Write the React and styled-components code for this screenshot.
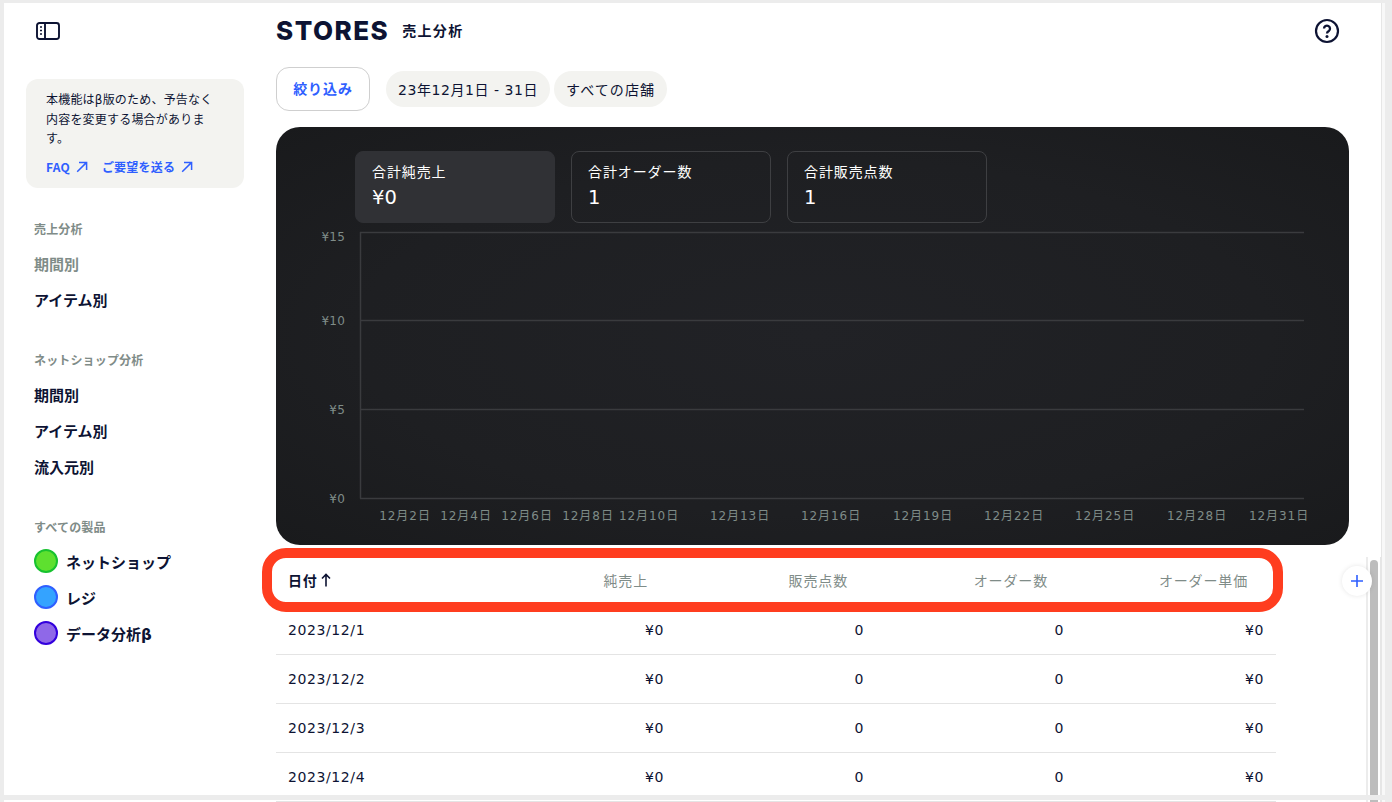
import React from "react";
import styled, { createGlobalStyle } from "styled-components";

const NAVY = "#0d1333";
const GREY = "#7f8c88";
const BLUE = "#2f5fff";
const CHIP = "#f3f3f0";
const JP = `"Noto Sans CJK JP", sans-serif`;
const NUM = `"DejaVu Sans", "Noto Sans CJK JP", sans-serif`;

const Global = createGlobalStyle`
  html, body { margin: 0; padding: 0; height: 802px; overflow: hidden; background: #ececec; }
  body { font-family: ${JP}; color: ${NAVY}; }
  * { box-sizing: border-box; }
`;

const Page = styled.div`
  position: relative;
  width: 1392px;
  height: 802px;
  overflow: hidden;
  background: #ececec;
  padding: 3px 0 0 4px;
`;
const Window = styled.div`
  display: flex;
  width: 1377px;
  height: 799px;
  background: #fff;
`;
const Sidebar = styled.aside`
  flex: 0 0 272px;
  display: flex;
  flex-direction: column;
  padding: 19px 0 0 22px;
`;
const Toggle = styled.svg`
  display: block;
  margin-left: 10px;
  width: 24px;
  height: 18px;
  color: ${NAVY};
`;
const Notice = styled.div`
  width: 218px;
  height: 109px;
  margin-top: 39px;
  padding: 12px 30px 0 20px;
  background: ${CHIP};
  border-radius: 12px;
  font-family: ${NUM};
  font-size: 12px;
  line-height: 19.5px;
  letter-spacing: 0.2px;
`;
const NoticeLinks = styled.div`
  display: flex;
  gap: 14px;
  margin-top: 8px;
  white-space: nowrap;
`;
const NoticeLink = styled.a`
  display: inline-flex;
  align-items: center;
  gap: 6px;
  color: ${BLUE};
  font-family: ${JP};
  font-size: 12px;
  line-height: 18px;
  font-weight: 700;
`;
const LinkArrow = styled.svg`
  width: 12px;
  height: 12px;
`;
const Section = styled.section`
  margin-top: ${(p) => p.$top}px;
  padding-left: 8px;
`;
const SectionTitle = styled.div`
  height: 20px;
  margin-bottom: 6px;
  font-size: 12px;
  line-height: 20px;
  font-weight: 700;
  letter-spacing: 0.15px;
  color: ${GREY};
`;
const NavItem = styled.div`
  display: flex;
  align-items: center;
  gap: 8px;
  height: 36px;
  font-size: 15px;
  font-weight: 700;
  font-family: ${NUM};
  color: ${(p) => (p.$dim ? GREY : NAVY)};
`;
const ProductDot = styled.span`
  flex: 0 0 24px;
  height: 24px;
  border-radius: 50%;
  background: ${(p) => p.$fill};
  border: 2px solid ${(p) => p.$ring};
`;
const Main = styled.main`
  position: relative;
  flex: 1;
  min-width: 0;
`;
const Header = styled.header`
  display: flex;
  align-items: center;
  width: 1073px;
  height: 56px;
`;
const Logo = styled.div`
  font-family: Inter, sans-serif;
  font-size: 26px;
  font-weight: 800;
  letter-spacing: 1.5px;
  line-height: 1;
`;
const Title = styled.h1`
  margin: 0 0 0 13px;
  font-size: 14px;
  font-weight: 700;
  letter-spacing: 1.3px;
  position: relative;
  top: -1px;
`;
const Help = styled.svg`
  margin-left: auto;
  margin-right: 9px;
  width: 26px;
  height: 26px;
  color: ${NAVY};
`;
const Filters = styled.div`
  display: flex;
  align-items: center;
  height: 44px;
  margin-top: 8px;
`;
const FilterButton = styled.button`
  width: 94px;
  height: 44px;
  margin-right: 16px;
  padding: 0 0 2px;
  background: #fff;
  border: 1px solid #cfcfcf;
  border-radius: 13px;
  color: ${BLUE};
  font-family: ${JP};
  font-size: 14px;
  font-weight: 700;
  letter-spacing: 0.9px;
`;
const Pill = styled.div`
  display: flex;
  align-items: center;
  height: 36px;
  margin-right: 4px;
  padding: 0 ${(p) => p.$right}px 0 12px;
  background: ${CHIP};
  border-radius: 18px;
  font-family: ${NUM};
  font-size: 14px;
  letter-spacing: ${(p) => p.$spacing}px;
`;
const ChartPanel = styled.section`
  width: 1073px;
  height: 418px;
  margin-top: 16px;
  border-radius: 24px;
  background: radial-gradient(ellipse at center, #212226 0%, #1e1f22 60%, #191a1c 100%);
`;
const Tabs = styled.div`
  display: flex;
  gap: 16px;
  padding: 24px 0 0 79px;
`;
const Tab = styled.div`
  width: 200px;
  height: 72px;
  padding: 8px 16px 0;
  border-radius: 8px;
  border: 1px solid ${(p) => (p.$active ? "#303135" : "#3e3f42")};
  background: ${(p) => (p.$active ? "#303135" : "transparent")};
  color: #fff;
`;
const TabLabel = styled.div`
  font-size: 14px;
  line-height: 22px;
  letter-spacing: 0.9px;
`;
const TabValue = styled.div`
  margin-top: 2px;
  font-family: ${NUM};
  font-size: 19.5px;
  line-height: 28px;
`;
const Chart = styled.svg`
  display: block;
  width: 1073px;
  height: 322px;
`;
const AxisText = styled.text`
  font-family: ${NUM};
  font-size: 12px;
  letter-spacing: ${(p) => p.$spacing}px;
  fill: ${GREY};
`;
const Table = styled.div`
  width: 1000px;
  margin-top: 12px;
`;
const Row = styled.div`
  display: grid;
  grid-template-columns: 176px repeat(4, 200px);
  align-items: center;
  height: 49px;
  padding: 0 12px;
  font-size: 14px;
  border-bottom: ${(p) => (p.$head ? "none" : "1px solid #e4e4e4")};
`;
const HeadCell = styled.div`
  display: flex;
  align-items: center;
  gap: 3px;
  justify-content: ${(p) => (p.$first ? "flex-start" : "flex-end")};
  padding: 0 ${(p) => (p.$first ? 0 : 16)}px 3px 0;
  color: ${(p) => (p.$first ? NAVY : GREY)};
  font-weight: ${(p) => (p.$first ? 700 : 400)};
  letter-spacing: 0.85px;
`;
const SortArrow = styled.svg`
  width: 10px;
  height: 14px;
`;
const Cell = styled.div`
  text-align: ${(p) => (p.$first ? "left" : "right")};
  font-family: ${NUM};
  font-size: 14px;
  letter-spacing: 0.6px;
`;
const Highlight = styled.div`
  position: absolute;
  left: -14px;
  top: 545px;
  width: 1021px;
  height: 64px;
  border: 10px solid #ff3d1f;
  border-radius: 24px;
  pointer-events: none;
`;
const AddButton = styled.button`
  position: absolute;
  left: 1066px;
  top: 563px;
  display: flex;
  align-items: center;
  justify-content: center;
  width: 30px;
  height: 30px;
  padding: 0;
  border: none;
  border-radius: 50%;
  background: #fff;
  color: ${BLUE};
  box-shadow: 0 0 5px rgba(0, 0, 0, 0.1);
`;
const PlusIcon = styled.svg`
  width: 12px;
  height: 12px;
`;
const ScrollTrack = styled.div`
  position: absolute;
  left: 1090px;
  top: 554px;
  bottom: 0;
  width: 15px;
  border-left: 2px solid #ececec;
  border-right: 1px solid #e6e6e6;
  background: #fff;
`;
const ScrollThumb = styled.div`
  position: absolute;
  left: 2px;
  top: 3px;
  bottom: 0;
  width: 8px;
  border-radius: 4px 4px 0 0;
  background: #bdbdbd;
`;
const EdgeRight = styled.div`
  position: absolute;
  top: 3px;
  right: 7px;
  bottom: 0;
  width: 4px;
  background: #f8f8f8;
  border-left: 1px solid #e6e6e6;
`;
const EdgeBottom = styled.div`
  position: absolute;
  left: 0;
  right: 0;
  top: 795px;
  height: 5px;
  background: #ececec;
`;

const xLabels = [
  [405, "12月2日"], [466, "12月4日"], [527, "12月6日"], [588, "12月8日"], [649, "12月10日"],
  [740, "12月13日"], [831, "12月16日"], [923, "12月19日"], [1014, "12月22日"], [1105, "12月25日"],
  [1197, "12月28日"], [1279, "12月31日"],
];
const yLabels = [[9, 18, "¥15"], [97, 102, "¥10"], [186, 191, "¥5"], [275, 280, "¥0"]];
const rows = ["2023/12/1", "2023/12/2", "2023/12/3", "2023/12/4"];
const heads = ["純売上", "販売点数", "オーダー数", "オーダー単価"];

const NorthEast = () => (
  <LinkArrow viewBox="0 0 12 12" fill="none" stroke="currentColor" strokeWidth="1.5">
    <path d="M1.2 10.8 10.6 1.4M3 1.4h7.6V9" />
  </LinkArrow>
);

export default function App() {
  return (
    <Page>
      <Global />
      <Window>
        <Sidebar>
          <Toggle viewBox="0 0 24 18" fill="none">
            <rect x="1" y="1" width="22" height="16" rx="2.5" stroke="currentColor" strokeWidth="1.9" />
            <path d="M9 1v16" stroke="currentColor" strokeWidth="1.9" />
            <path d="M4 5h2M4 8.5h2M4 12h2" stroke="currentColor" strokeWidth="1.6" />
          </Toggle>
          <Notice>
            本機能はβ版のため、予告なく内容を変更する場合があります。
            <NoticeLinks>
              <NoticeLink>FAQ<NorthEast /></NoticeLink>
              <NoticeLink>ご要望を送る<NorthEast /></NoticeLink>
            </NoticeLinks>
          </Notice>
          <Section $top={31}>
            <SectionTitle>売上分析</SectionTitle>
            <NavItem $dim>期間別</NavItem>
            <NavItem>アイテム別</NavItem>
          </Section>
          <Section $top={33}>
            <SectionTitle>ネットショップ分析</SectionTitle>
            <NavItem>期間別</NavItem>
            <NavItem>アイテム別</NavItem>
            <NavItem>流入元別</NavItem>
          </Section>
          <Section $top={33}>
            <SectionTitle>すべての製品</SectionTitle>
            <NavItem><ProductDot $fill="#5ee02f" $ring="#17c22f" />ネットショップ</NavItem>
            <NavItem><ProductDot $fill="#34a3ff" $ring="#2f5fff" />レジ</NavItem>
            <NavItem><ProductDot $fill="#8f68e8" $ring="#3300dd" />データ分析β</NavItem>
          </Section>
        </Sidebar>
        <Main>
          <Header>
            <Logo>STORES</Logo>
            <Title>売上分析</Title>
            <Help viewBox="0 0 26 26" fill="none">
              <circle cx="13" cy="13" r="11" stroke="currentColor" strokeWidth="2.2" />
              <path d="M10 10.6a3 3 0 1 1 4.8 2.4c-1.2.8-1.8 1.2-1.8 2.4" stroke="currentColor" strokeWidth="2.3" />
              <circle cx="13" cy="18.6" r="1.5" fill="currentColor" />
            </Help>
          </Header>
          <Filters>
            <FilterButton>絞り込み</FilterButton>
            <Pill $right={12} $spacing={0.55}>23年12月1日 - 31日</Pill>
            <Pill $right={12} $spacing={1.1}>すべての店舗</Pill>
          </Filters>
          <ChartPanel>
            <Tabs>
              <Tab $active><TabLabel>合計純売上</TabLabel><TabValue>¥0</TabValue></Tab>
              <Tab><TabLabel>合計オーダー数</TabLabel><TabValue>1</TabValue></Tab>
              <Tab><TabLabel>合計販売点数</TabLabel><TabValue>1</TabValue></Tab>
            </Tabs>
            <Chart viewBox="0 0 1073 322">
              <path d="M84.5 9v266.5" stroke="#3a3b3e" strokeWidth="1.5" />
              {yLabels.map(([y, ty, label]) => (
                <g key={label}>
                  <path d={`M84 ${y + 0.5}H1028`} stroke="#3a3b3e" strokeWidth="1.5" />
                  <AxisText x="69" y={ty} textAnchor="end" $spacing={0.2}>{label}</AxisText>
                </g>
              ))}
              {xLabels.map(([x, label]) => (
                <AxisText key={label} x={x - 276} y="297" textAnchor="middle" $spacing={0.95}>{label}</AxisText>
              ))}
            </Chart>
          </ChartPanel>
          <Table>
            <Row $head>
              <HeadCell $first>
                日付
                <SortArrow viewBox="0 0 10 14" fill="none" stroke="currentColor" strokeWidth="1.6">
                  <path d="M5 13.5V1.5M1 5.5l4-4 4 4" />
                </SortArrow>
              </HeadCell>
              {heads.map((h) => <HeadCell key={h}>{h}</HeadCell>)}
            </Row>
            {rows.map((d) => (
              <Row key={d}>
                <Cell $first>{d}</Cell>
                <Cell>¥0</Cell>
                <Cell>0</Cell>
                <Cell>0</Cell>
                <Cell>¥0</Cell>
              </Row>
            ))}
          </Table>
          <Highlight />
          <ScrollTrack><ScrollThumb /></ScrollTrack>
          <AddButton>
            <PlusIcon viewBox="0 0 12 12" fill="none" stroke="currentColor" strokeWidth="1.6">
              <path d="M6 0v12M0 6h12" />
            </PlusIcon>
          </AddButton>
        </Main>
      </Window>
      <EdgeRight />
      <EdgeBottom />
    </Page>
  );
}
